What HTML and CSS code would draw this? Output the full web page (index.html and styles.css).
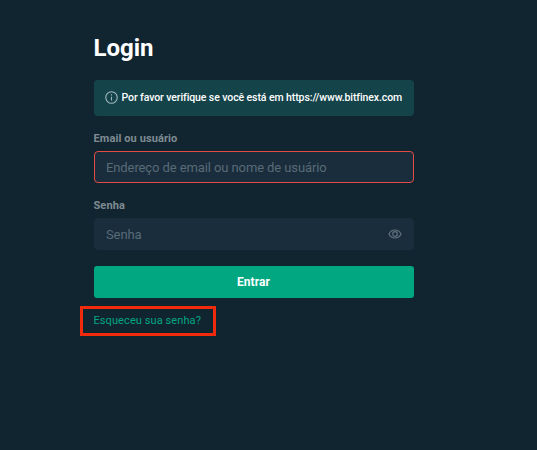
FILE: index.html
```html
<!DOCTYPE html>
<html lang="pt">
<head>
    <meta charset="UTF-8">
    <meta name="viewport" content="width=device-width, initial-scale=1.0">
    <title>Login</title>
    <link rel="stylesheet" href="styles.css">
</head>
<body>
    <main class="login">
        <h1>Login</h1>

        <div class="notice">
            <svg class="info-icon" viewBox="0 0 12 12" fill="none" stroke="currentColor">
                <circle cx="6" cy="6" r="5.3"/>
                <path d="M6 5.2v3.6M6 3.1v1.1"/>
            </svg>
            <span>Por favor verifique se você está em https://www.bitfinex.com</span>
        </div>

        <form>
            <label for="email">Email ou usuário</label>
            <div class="field error">
                <input type="text" id="email" placeholder="Endereço de email ou nome de usuário">
            </div>

            <label for="password">Senha</label>
            <div class="field">
                <input type="password" id="password" placeholder="Senha">
                <svg class="eye-icon" viewBox="0 0 14 10" fill="none" stroke="currentColor" stroke-width="1.2">
                    <path d="M1 5C2.2 2.3 4.4 1 7 1s4.8 1.3 6 4C11.8 7.7 9.6 9 7 9S2.2 7.7 1 5z"/>
                    <circle cx="7" cy="5" r="2.3"/>
                </svg>
            </div>

            <button type="button">Entrar</button>
        </form>

        <div class="forgot">
            <a href="#">Esqueceu sua senha?</a>
        </div>
    </main>
</body>
</html>
```
FILE: styles.css
```css
:root {
    --bg: #112531;
    --field: #1a2d3d;
    --notice: #14434a;
    --green: #01a781;
    --error: #e44b44;
    --muted: #7f8b92;
    --highlight: #f12b0c;
}

* {
    margin: 0;
    padding: 0;
    box-sizing: border-box;
    font-family: Roboto, "Liberation Sans", sans-serif;
}

body {
    background-color: var(--bg);
    color: #fff;
    min-height: 100vh;
}

.login {
    width: 320px;
    margin-left: 94px;
    padding-top: 32px;
}

h1 {
    font-size: 24px;
    line-height: 32px;
    font-weight: 700;
    margin-bottom: 16px;
    text-indent: -0.5px;
}

.notice {
    display: flex;
    align-items: center;
    gap: 3.5px;
    height: 36px;
    padding: 0 0 1px 11px;
    border-radius: 4px;
    background-color: var(--notice);
    font-size: 10.5px;
    font-weight: 500;
    letter-spacing: -0.09px;
    white-space: nowrap;
    margin-bottom: 14px;
}

.info-icon {
    flex-shrink: 0;
    width: 13px;
    height: 13px;
    color: #a3b9bc;
}

label {
    display: block;
    height: 21px;
    line-height: 17px;
    font-size: 11px;
    font-weight: 700;
    letter-spacing: 0.1px;
    text-indent: -0.5px;
    color: var(--muted);
}

.field {
    display: flex;
    align-items: center;
    height: 32px;
    padding: 0 11px;
    border: 1px solid var(--field);
    border-radius: 4px;
    background-color: var(--field);
    margin-bottom: 14px;
}

.field.error {
    border-color: var(--error);
}

input {
    flex: 1;
    min-width: 0;
    background: none;
    border: none;
    outline: none;
    color: #fff;
    font-size: 13px;
    letter-spacing: -0.1px;
}

input::placeholder {
    color: #586b76;
}

.eye-icon {
    width: 14px;
    height: 10px;
    color: #5f717c;
}

button {
    display: block;
    width: 100%;
    height: 32px;
    margin-top: 16px;
    padding-right: 1px;
    border: none;
    border-radius: 3px;
    background-color: var(--green);
    color: #fff;
    font-size: 12px;
    font-weight: 700;
    letter-spacing: 0.1px;
    cursor: pointer;
}

.forgot {
    width: 136px;
    height: 30px;
    margin: 8px 0 0 -14px;
    padding-left: 10.5px;
    border: 3px solid var(--highlight);
    line-height: 23px;
    font-size: 11px;
    letter-spacing: 0.09px;
}

.forgot a {
    color: var(--green);
    text-decoration: none;
}
```
